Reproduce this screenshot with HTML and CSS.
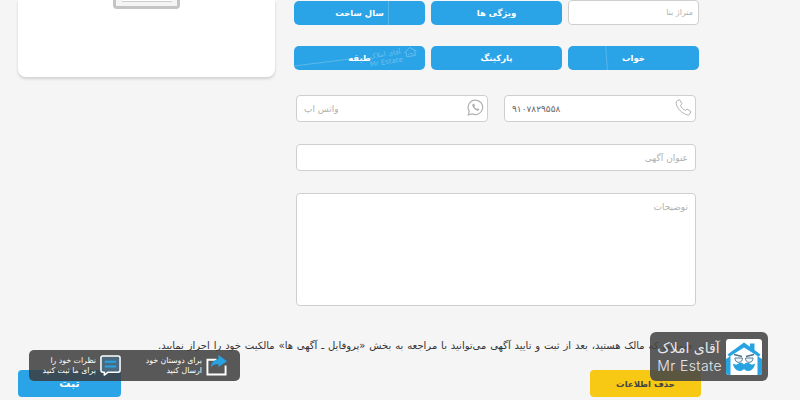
FILE: index.html
```html
<!DOCTYPE html>
<html lang="fa" dir="rtl">
<head>
    <meta charset="UTF-8">
    <meta name="viewport" content="width=device-width, initial-scale=1.0">
    <title>ثبت آگهی</title>
    <link rel="stylesheet" href="styles.css">
</head>
<body>

    <div class="page-layout">
        <!-- form column comes first because the page is rtl -->
        <form class="ad-form">
            <div class="form-row three-cols first-row">
                <input class="text-input area-input" type="text" placeholder="متراژ بنا">
                <button type="button" class="select-button">ویژگی ها</button>
                <button type="button" class="select-button has-line line-year">سال ساخت</button>
            </div>

            <div class="form-row three-cols second-row">
                <button type="button" class="select-button has-line line-bed">خواب</button>
                <button type="button" class="select-button">پارکینگ</button>
                <button type="button" class="select-button floor-button">
                    <span class="floor-label">طبقه</span>
                    <span class="watermark">
                        <svg class="watermark-logo" viewBox="0 0 16 12" fill="none" stroke="#ffffff" stroke-width="1">
                            <path d="M1 6 8 1l7 5M3 5v6h10V5"/>
                            <path d="M5 9c1.500 0 2-1 3-1s1.500 1 3 1"/>
                        </svg>
                        <span class="watermark-text">
                            <span>آقای املاک</span>
                            <span dir="ltr">Mr Estate</span>
                        </span>
                    </span>
                    <span class="diagonal-line"></span>
                </button>
            </div>

            <div class="inner-fields">
                <div class="form-row two-cols">
                    <div class="icon-field">
                        <input class="text-input phone-input" type="text" value="۹۱۰۷۸۲۹۵۵۸">
                        <svg class="field-icon" viewBox="0 0 24 24" fill="none" stroke="#b0b0b0" stroke-width="1.400" stroke-linejoin="round">
                            <path d="M3 2.500 6.400 1 10 6.800 7.800 9c.9 3 3.600 5.900 7 7.200L17 14.100l5.500 3.700-1.800 3.700c-.6 1-1.700 1.400-2.900 1.100C9.700 20.400 3.100 13.700 1.500 5.900 1.300 4.700 2.100 3.100 3 2.500Z"/>
                        </svg>
                    </div>
                    <div class="icon-field">
                        <input class="text-input whatsapp-input" type="text" placeholder="واتس اپ">
                        <svg class="field-icon" viewBox="0 0 24 24" fill="none" stroke="#b0b0b0" stroke-width="1.700">
                            <path d="M12 1.500a10.300 10.300 0 0 0-8.800 15.700L1.900 22.300l5.100-1.400A10.300 10.300 0 1 0 12 1.500Z"/>
                            <path d="M8.500 6.800c-1 .6-1.300 1.800-.8 3.200 1 2.800 3.400 5.200 6.200 6.200 1.400.5 2.600.2 3.200-.8l.3-1.100-2.500-1.300-1 1c-1.400-.6-2.900-2.100-3.500-3.500l1-1L10 6.800Z" fill="#b0b0b0" stroke="none"/>
                        </svg>
                    </div>
                </div>

                <input class="text-input wide-input" type="text" placeholder="عنوان آگهی">
                <textarea class="text-input description-input" placeholder="توضیحات"></textarea>
            </div>
        </form>

        <aside class="side-column">
            <div class="image-card">
                <div class="image-placeholder"><div class="placeholder-inner"></div></div>
            </div>
        </aside>
    </div>

    <p class="owner-note">در صورتی که مالک هستید، بعد از ثبت و تایید آگهی می‌توانید با مراجعه به بخش «پروفایل ـ آگهی ها» مالکیت خود را احراز نمایید.</p>

    <div class="action-row">
        <button type="button" class="delete-button">حذف اطلاعات</button>
        <button type="button" class="submit-button">ثبت</button>
    </div>

    <!-- floating badges over the page -->
    <div class="brand-badge">
        <svg class="brand-logo" viewBox="0 0 36 36">
            <rect width="36" height="36" rx="3" fill="#ffffff"/>
            <path d="M0 20l4.500-3V36H3a3 3 0 0 1-3-3ZM36 20l-4.500-3V36H33a3 3 0 0 0 3-3Z" fill="#27a3e2"/>
            <path d="M1.500 15.500 18 3.500l6 4.300V4.500h4.500v6.600l6 4.400-1.800 2.300L18 8.400 3.300 17.800Z" fill="#27a3e2"/>
            <path d="M9 19h7.500c0 2.800-1.500 4.400-3.800 4.400S9 21.800 9 19ZM19.500 19H27c0 2.800-1.500 4.400-3.800 4.400s-3.700-1.600-3.700-4.400Z" fill="#e6f4fc" stroke="#4f7286" stroke-width=".9"/>
            <path d="M8 15.500l8 2M28 15.500l-8 2" stroke="#4f7286" stroke-width="1.400"/>
            <path d="M18 25.500c-1.500-2-4-2.300-6-.8-1.600 1.200-3.300 1.200-5 -.2.500 4.200 3.200 7.500 7 7.500 2 0 3.200-.9 4-2.200.8 1.300 2 2.200 4 2.200 3.800 0 6.500-3.300 7-7.500-1.700 1.400-3.400 1.400-5 .2-2-1.500-4.500-1.200-6 .8Z" fill="#27a3e2"/>
        </svg>
        <div class="brand-text">
            <span class="brand-fa">آقای املاک</span>
            <span class="brand-en" dir="ltr">Mr Estate</span>
        </div>
    </div>

    <div class="share-bar">
        <div class="share-item share-friends">
            <svg class="share-icon" viewBox="0 0 22 22">
                <path d="M11 5H1.500v15.500h19V11" fill="none" stroke="#ffffff" stroke-width="2"/>
                <path d="M13 0l9 6.500-9 6V9.500c-3.500 0-6 1-8 3.500.5-5 3.500-8 8-8.500Z" fill="#27a3e2"/>
            </svg>
            <span class="share-text">برای دوستان خود<br>ارسال کنید</span>
        </div>
        <div class="share-item">
            <svg class="share-icon" viewBox="0 0 22 22">
                <path d="M3 1h16a2 2 0 0 1 2 2v13a2 2 0 0 1-2 2H8.500L4.500 21v-3H3a2 2 0 0 1-2-2V3a2 2 0 0 1 2-2Z" fill="#4a6a80" stroke="#ffffff" stroke-width="1.600" stroke-linejoin="round"/>
                <path d="M5 7h12M5 12h12" stroke="#27a3e2" stroke-width="2"/>
            </svg>
            <span class="share-text">نظرات خود را<br>برای ما ثبت کنید</span>
        </div>
    </div>

</body>
</html>
```

FILE: styles.css
```css
/* Basic Reset & Font */
html, body {
    margin: 0;
    padding: 0;
    height: 400px;
    overflow: hidden;
    font-family: "DejaVu Sans", sans-serif;
    background-color: #f5f5f5;
    color: #333;
}

body {
    position: relative;
}

/* Main layout */
.page-layout {
    display: flex;
    flex-direction: row;
    padding: 0 101px 0 18px;
    justify-content: space-between;
}

.side-column {
    width: 257px;
}

.image-card {
    height: 77px;
    background-color: #ffffff;
    border-radius: 0 0 8px 8px;
    box-shadow: 0 2px 3px rgba(0, 0, 0, 0.15);
    display: flex;
    justify-content: center;
    align-items: flex-start;
}

.image-placeholder {
    box-sizing: border-box;
    width: 67px;
    height: 9px;
    border: 3px solid #c4c4c4;
    border-top: none;
    border-radius: 0 0 4px 4px;
    background-color: #f4f4f4;
    display: flex;
    justify-content: center;
}

.placeholder-inner {
    width: 50px;
    height: 1px;
    border-bottom: 1px solid #cccccc;
    background-color: #ffffff;
}

/* Form */
.ad-form {
    width: 405px;
}

.form-row {
    display: grid;
    column-gap: 6px;
}

.three-cols {
    grid-template-columns: repeat(3, 1fr);
    height: 24px;
}

.first-row {
    padding-top: 1px;
}

.second-row {
    margin-top: 21px;
}

.inner-fields {
    margin: 25px 3px 0 2px;
}

.two-cols {
    grid-template-columns: repeat(2, 1fr);
    column-gap: 16px;
}

.text-input {
    box-sizing: border-box;
    width: 100%;
    height: 27px;
    padding: 0 7px;
    background-color: #ffffff;
    border: 1px solid #cfcfcf;
    border-radius: 4px;
    font-family: inherit;
    font-size: 9px;
    color: #666;
    outline: none;
    display: block;
}

.text-input::placeholder {
    color: #b0b0b0;
}

.area-input {
    height: 25px;
    margin-top: -1px;
    padding: 0 5px;
    font-size: 8px;
}

.phone-input {
    text-align: left;
    letter-spacing: 0.4px;
}

.whatsapp-input {
    text-align: left;
}

.wide-input {
    margin-top: 22px;
}

.description-input {
    height: 113px;
    margin-top: 22px;
    padding-top: 8px;
    resize: none;
}

.icon-field {
    position: relative;
}

.field-icon {
    position: absolute;
    top: 4px;
    right: 4px;
    width: 17px;
    height: 17px;
}

/* Blue select buttons */
.select-button {
    position: relative;
    background-color: #2ba4e7;
    color: #ffffff;
    border: none;
    border-radius: 5px;
    font-family: inherit;
    font-size: 8.5px;
    font-weight: bold;
    padding: 0;
    overflow: hidden;
}

.has-line::after {
    content: "";
    position: absolute;
    top: 0;
    bottom: 0;
    width: 1px;
    background-color: rgba(255, 255, 255, 0.2);
}

.line-year::after {
    left: 94px;
}

.line-bed::after {
    left: 38px;
    transform: rotate(-4deg);
}

.floor-label {
    position: relative;
}

.watermark {
    position: absolute;
    top: 3px;
    left: 75px;
    display: flex;
    flex-direction: row;
    align-items: flex-start;
    gap: 2px;
    transform: rotate(-9deg);
    color: rgba(255, 255, 255, 0.3);
    font-size: 7px;
    font-weight: normal;
    line-height: 8px;
    white-space: nowrap;
}

.watermark-logo {
    width: 14px;
    height: 11px;
    opacity: 0.3;
}

.watermark-text {
    display: flex;
    flex-direction: column;
}

.diagonal-line {
    position: absolute;
    left: 0;
    top: 16px;
    width: 56px;
    height: 1px;
    background-color: rgba(255, 255, 255, 0.22);
    transform: rotate(-7deg);
}

/* Note and bottom buttons */
.owner-note {
    margin: 33px 0 0;
    padding-left: 158px;
    text-align: left;
    white-space: nowrap;
    font-size: 10px;
    line-height: 14px;
    word-spacing: 0.7px;
    color: #333;
}

.action-row {
    margin-top: 17px;
    padding: 0 99px 0 18px;
    display: flex;
    justify-content: space-between;
}

.delete-button,
.submit-button {
    height: 27px;
    border: none;
    border-radius: 4px;
    font-family: inherit;
    font-size: 8.5px;
    font-weight: bold;
    padding: 0;
}

.delete-button {
    width: 111px;
    background-color: #f7c914;
    color: #444;
}

.submit-button {
    width: 103px;
    background-color: #2ba4e7;
    color: #ffffff;
    font-size: 11px;
}

/* Floating badges */
.brand-badge {
    position: absolute;
    top: 332px;
    left: 650px;
    width: 118px;
    height: 49px;
    box-sizing: border-box;
    padding: 0 6px 0 4px;
    display: flex;
    align-items: center;
    gap: 4px;
    background-color: rgba(70, 70, 70, 0.88);
    border-radius: 6px;
}

.brand-logo {
    width: 36px;
    height: 36px;
    flex-shrink: 0;
}

.brand-text {
    display: flex;
    flex-direction: column;
    align-items: flex-end;
    color: #e8e8e8;
    white-space: nowrap;
}

.brand-fa {
    font-size: 14px;
    line-height: 18px;
}

.brand-en {
    font-family: "Inter", sans-serif;
    font-size: 14px;
    font-weight: 300;
    letter-spacing: 0.4px;
    line-height: 17px;
}

.share-bar {
    position: absolute;
    top: 350px;
    left: 29px;
    width: 211px;
    height: 31px;
    box-sizing: border-box;
    display: flex;
    flex-direction: row;
    padding-right: 13px;
    background-color: rgba(60, 60, 60, 0.85);
    border-radius: 5px;
}

.share-item {
    display: flex;
    align-items: center;
    gap: 4px;
}

.share-friends {
    width: 106px;
}

.share-icon {
    width: 21px;
    height: 21px;
    flex-shrink: 0;
}

.share-text {
    font-size: 7.8px;
    line-height: 10px;
    color: #ffffff;
    white-space: nowrap;
}
```
